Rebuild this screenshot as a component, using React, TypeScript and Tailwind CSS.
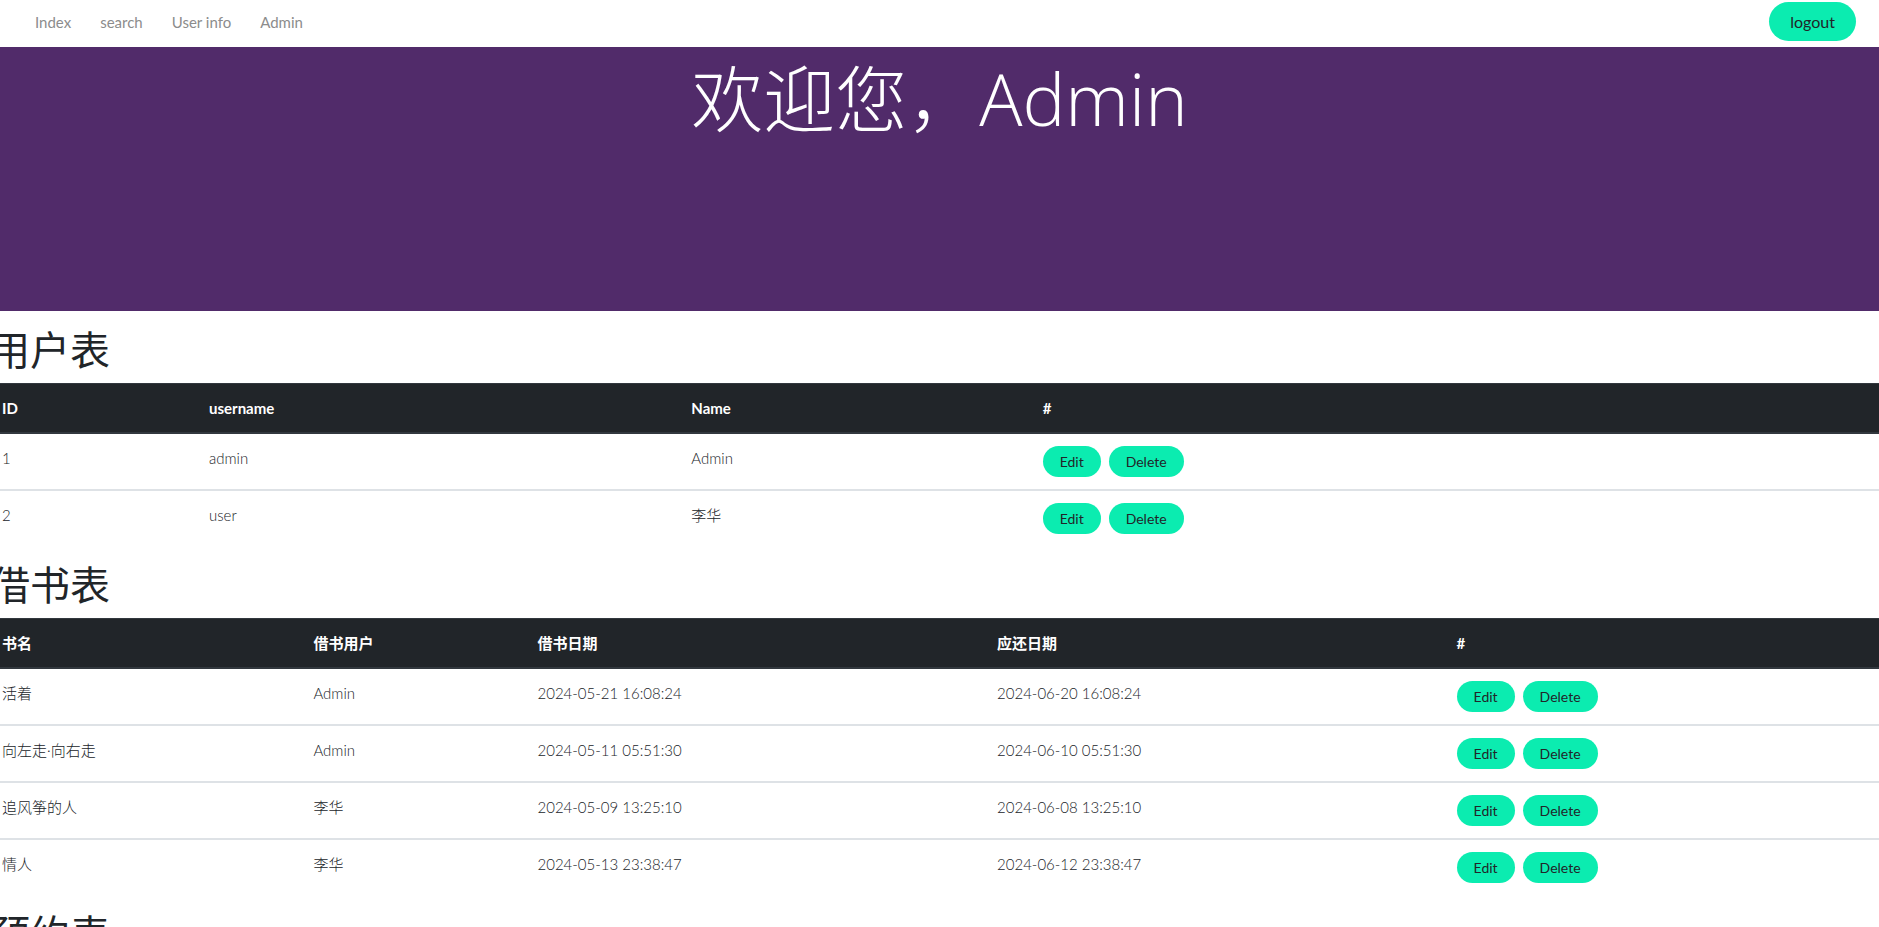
import type { ReactNode } from "react";

const navLinks = ["Index", "search", "User info", "Admin"];

const users = [
  ["1", "admin", "Admin"],
  ["2", "user", "李华"],
];

const loans = [
  ["活着", "Admin", "2024-05-21 16:08:24", "2024-06-20 16:08:24"],
  ["向左走·向右走", "Admin", "2024-05-11 05:51:30", "2024-06-10 05:51:30"],
  ["追风筝的人", "李华", "2024-05-09 13:25:10", "2024-06-08 13:25:10"],
  ["情人", "李华", "2024-05-13 23:38:47", "2024-06-12 23:38:47"],
];

function ActionButton({ children }: { children: ReactNode }) {
  return (
    <button
      type="button"
      className="h-[31px] rounded-full bg-[#0becb0] px-[17px] text-[14px] font-normal leading-5 text-[#212529]"
    >
      {children}
    </button>
  );
}

function Section({ title, children }: { title: string; children?: ReactNode }) {
  return (
    <section className="-mx-[10px] pt-[15px]">
      <h2 className="mb-[9px] text-[40px] font-normal leading-[48px]">{title}</h2>
      {children}
    </section>
  );
}

function DataTable({
  label,
  columns,
  widths,
  rows,
}: {
  label: string;
  columns: string[];
  widths: string[];
  rows: string[][];
}) {
  return (
    <table aria-label={label} className="w-full table-fixed border-separate border-spacing-0 text-left">
      <colgroup>
        {columns.map((column, i) => (
          <col key={column} className={widths[i]} />
        ))}
      </colgroup>
      <thead className="bg-[#212529] text-white">
        <tr>
          {columns.map((column) => (
            <th
              key={column}
              scope="col"
              className="border-t border-b-2 border-[#32383e] px-3 py-3 font-bold"
            >
              {column}
            </th>
          ))}
        </tr>
      </thead>
      <tbody>
        {rows.map((row, r) => {
          const cell = r === 0 ? "px-3 py-3 align-top" : "border-t-2 border-[#dee2e6] px-3 py-3 align-top";
          return (
            <tr key={r}>
              {row.map((value, c) => (
                <td key={c} className={cell}>
                  {value}
                </td>
              ))}
              <td className={cell}>
                <div className="flex gap-2">
                  <ActionButton>Edit</ActionButton>
                  <ActionButton>Delete</ActionButton>
                </div>
              </td>
            </tr>
          );
        })}
      </tbody>
    </table>
  );
}

export default function App() {
  return (
    <div className="h-screen overflow-hidden bg-white font-['Lato','Noto_Sans_CJK_SC',sans-serif] text-[15px] font-light leading-6 text-[#212529]">
      <nav className="flex h-[47px] items-start justify-between pr-[23px] pl-[35px]">
        <ul className="flex gap-[29px] pt-[10px] font-normal text-[#8c8c8c]">
          {navLinks.map((link) => (
            <li key={link}>
              <a href="#">{link}</a>
            </li>
          ))}
        </ul>
        <button
          type="button"
          className="mt-[2px] h-[39px] rounded-full bg-[#0becb0] px-[21px] text-[16px] font-normal leading-6 text-[#212529]"
        >
          logout
        </button>
      </nav>

      <header className="h-[264px] bg-[#512b6a] pt-2 text-center text-white">
        <h1 className="font-['Open_Sans','Noto_Sans_CJK_SC',sans-serif] text-[72px] font-light leading-[86px]">
          欢迎您，Admin
        </h1>
      </header>

      <main>
        <Section title="用户表">
          <DataTable
            label="用户表"
            columns={["ID", "username", "Name", "#"]}
            widths={["w-[10.9%]", "w-[25.4%]", "w-[18.5%]", "w-[45.2%]"]}
            rows={users}
          />
        </Section>
        <Section title="借书表">
          <DataTable
            label="借书表"
            columns={["书名", "借书用户", "借书日期", "应还日期", "#"]}
            widths={["w-[16.4%]", "w-[11.8%]", "w-[24.2%]", "w-[24.2%]", "w-[23.4%]"]}
            rows={loans}
          />
        </Section>
        <Section title="预约表" />
      </main>
    </div>
  );
}
